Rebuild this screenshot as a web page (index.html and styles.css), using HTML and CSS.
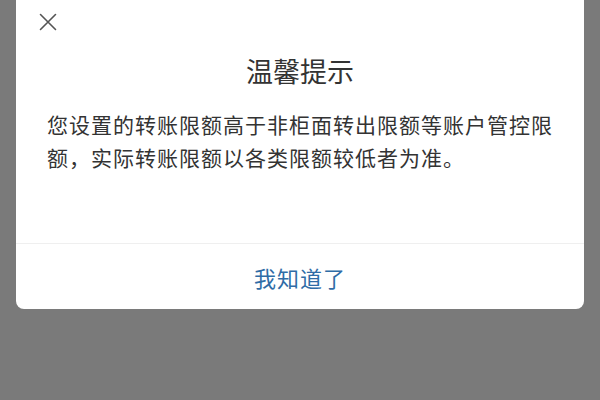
FILE: index.html
```html
<!DOCTYPE html>
<html lang="zh-CN">
<head>
<meta charset="utf-8">
<title>温馨提示</title>
<link rel="stylesheet" href="styles.css">
</head>
<body>
<div class="screen">
  <div class="dialog">
    <div class="dialog-head">
      <button class="close" aria-label="关闭">
        <svg width="18" height="18" viewBox="0 0 18 18"><path d="M1.5 1.5 L16.5 16.5 M16.5 1.5 L1.5 16.5" stroke="#555" stroke-width="1.6" fill="none" stroke-linecap="round"/></svg>
      </button>
    </div>
    <h1 class="title">温馨提示</h1>
    <p class="message">您设置的转账限额高于非柜面转出限额等账户管控限额，实际转账限额以各类限额较低者为准。</p>
    <div class="footer">
      <button class="ok">我知道了</button>
    </div>
  </div>
</div>
</body>
</html>
```

FILE: styles.css
```css
html, body {
  margin: 0;
  padding: 0;
}
body {
  width: 600px;
  height: 400px;
  background: #7a7a7a;
  font-family: "Noto Sans CJK SC", "Noto Sans", sans-serif;
  overflow: hidden;
}
.screen {
  padding: 0 16px;
}
.dialog {
  background: #ffffff;
  border-radius: 0 0 8px 8px;
  display: flex;
  flex-direction: column;
}
.dialog-head {
  height: 44px;
  display: flex;
  align-items: center;
  padding-left: 23px;
}
.close {
  border: 0;
  background: none;
  padding: 0;
  width: 18px;
  height: 18px;
  display: flex;
}
.title {
  margin: 9px 0 0;
  font-size: 27px;
  line-height: 36px;
  font-weight: normal;
  color: #333333;
  text-align: center;
}
.message {
  margin: 19px 0 0;
  padding: 0 28px 0 31px;
  font-size: 21px;
  line-height: 33px;
  letter-spacing: 1px;
  color: #333333;
  height: 135px;
}
.footer {
  border-top: 1px solid #efefef;
  height: 65px;
  display: flex;
  align-items: center;
  justify-content: center;
}
.ok {
  border: 0;
  background: none;
  padding: 0;
  font-family: inherit;
  font-size: 22px;
  line-height: 30px;
  letter-spacing: 1px;
  color: #2f6ca6;
}
```
